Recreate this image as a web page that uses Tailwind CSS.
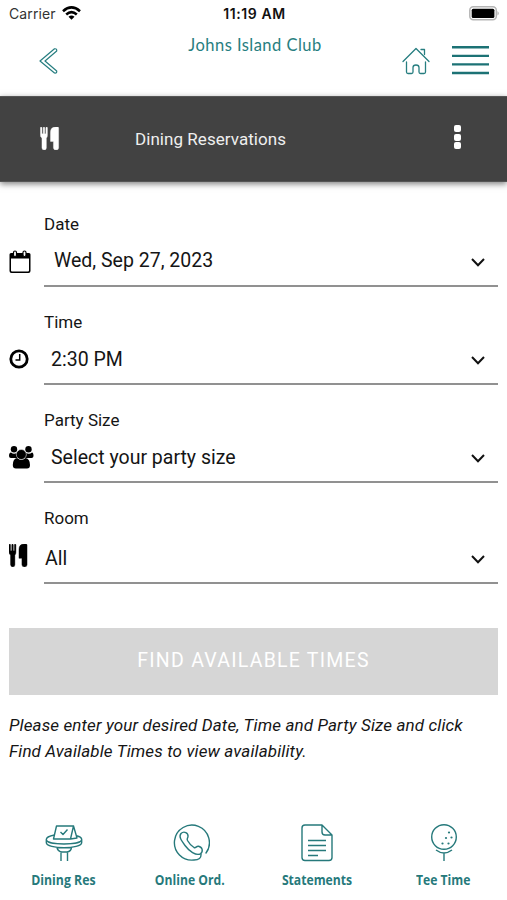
<!DOCTYPE html>
<html lang="en">
<head>
<meta charset="utf-8">
<title>Dining Reservations</title>
<script src="https://cdn.jsdelivr.net/npm/@tailwindcss/browser@4"></script>
</head>
<body class="bg-white">
<svg class="hidden">
  <symbol id="utensils" viewBox="0 0 20 24">
    <path d="M0 1Q0 0 .8 0T1.6 1V7H2.9V1Q2.9 0 3.7 0T4.5 1V7H5.7V1Q5.7 0 6.5 0T7.3 1V8.5Q7.3 10.8 6.2 11.6V21.8Q6.200 24 4 24T1.600 21.800V11.600Q0 10.800 0 8.500ZM19 1V21.800Q19 24 16.300 24T13.600 21.800V15H10.500V5.500Q10.500 0 16 0H18Q19 0 19 1Z" fill="currentColor" stroke="currentColor" stroke-width=".4"/>
  </symbol>
  <symbol id="chev" viewBox="0 0 14 9"><path d="M1 1L7 7.200L13 1" fill="none" stroke="#111" stroke-width="2"/></symbol>
</svg>
<main class="w-[507px] h-[900px] flex flex-col overflow-hidden font-['Roboto',sans-serif] text-[#151515]">
  <header class="h-24 shrink-0 flex flex-col">
    <div class="h-7 grid grid-cols-3 items-center pl-[9px] pr-[7px] font-['Inter',sans-serif] text-[14px] leading-7">
      <div class="flex items-center gap-[6px] text-[#333]">
        <span class="tracking-[0.1px]">Carrier</span>
        <svg class="w-[19px] h-[14px] -mt-[2px]" viewBox="0 0 19 14"><g fill="none" stroke="#000" stroke-width="2.6"><path d="M1 5.2Q9.500-2.400 18 5.200"/><path d="M4.200 8.400Q9.500 3.800 14.800 8.400"/></g><path d="M6.500 10.700Q9.500 8.300 12.500 10.700L9.500 13.800Z"/></svg>
      </div>
      <div class="text-center font-semibold text-[14px] tracking-[0.600px] text-[#111] whitespace-nowrap">11:19 AM</div>
      <svg class="justify-self-end -mt-[2px] w-[31px] h-[15px]" viewBox="0 0 31 15"><rect x=".8" y=".8" width="26.500" height="13" rx="3.500" fill="#fff" stroke="#b5b5b5" stroke-width="1.500"/><rect x="2.700" y="2.700" width="22.700" height="9.200" rx="1.500"/><path d="M28.500 5Q31 7.300 28.500 9.600Z" fill="#aaa"/></svg>
    </div>
    <div class="flex-1 grid grid-cols-3 pl-[39px] pr-[17px] text-[#277e80]">
      <svg class="mt-5 w-[20px] h-[27px]" viewBox="0 0 20 27" fill="none" stroke="currentColor" stroke-width="1.200" stroke-linejoin="round"><path d="M1 13L15.500.8Q18 .4 17.700 3L6 13L17.700 23Q18 25.500 15.500 25Z"/></svg>
      <h1 class="justify-self-center -ml-[19px] mt-[6px] text-[16.500px] leading-[22px] font-['Lato',sans-serif] tracking-[0.460px] whitespace-nowrap">Johns Island Club</h1>
      <div class="flex justify-end gap-[22px]">
        <svg class="mt-[19px] -mr-px w-[28px] h-[28px]" viewBox="0 0 28 28" fill="none" stroke="currentColor" stroke-width="1.300" stroke-linecap="round" stroke-linejoin="round"><path d="M1 14.500L14 1.500L27 14.500M19 2.500H22.500V7.500M4.500 15V25Q4.500 26.500 6 26.500H9.500Q11 26.500 11 25V20.500Q11 18 14 18T17 20.500V25Q17 26.500 18.500 26.500H22Q23.500 26.500 23.500 25V15"/></svg>
        <svg class="mt-[17px] w-[39px] h-[30px]" viewBox="0 0 39 30"><path d="M1 2.200H38M1 10.900H38M1 19.400H38M1 28H38" stroke="#1c7275" stroke-width="2.400"/></svg>
      </div>
    </div>
  </header>
  <div class="h-[86px] shrink-0 bg-[#424242] border-y border-[#555] shadow-[0_2px_6px_rgba(0,0,0,0.500)] flex items-center pl-10 pr-[46px] text-[#efefef]">
    <svg class="w-[20px] h-[23px] -mt-[2px] text-white"><use href="#utensils"/></svg>
    <h2 class="ml-[75px] text-[17px] leading-6 tracking-[0.050px]">Dining Reservations</h2>
    <div class="ml-auto -mt-[4px] flex flex-col gap-[1.500px]"><i class="w-[7px] h-[7px] rounded-[2px] bg-white"></i><i class="w-[7px] h-[7px] rounded-[2px] bg-white"></i><i class="w-[7px] h-[7px] rounded-[2px] bg-white"></i></div>
  </div>
  <form class="shrink-0 pl-[9px] pr-[9px]">
    <div class="h-[105px] flex">
      <svg class="mt-[68px] w-[22px] h-[24px] mr-[13px]" viewBox="0 0 22 24"><path fill-rule="evenodd" d="M2 3H20Q21.500 3 21.500 4.500V21Q21.500 23 19.500 23H2.500Q.5 23 .5 21V4.500Q.5 3 2 3ZM2 8.500V20.500Q2 21.500 3 21.500H19Q20 21.500 20 20.500V8.500Z"/><g fill="#fff" stroke="#000" stroke-width="1.200"><rect x="4.500" y="1" width="3" height="5.500" rx="1.500"/><rect x="14" y="1" width="3" height="5.500" rx="1.500"/></g></svg>
      <div class="flex-1 border-b-2 border-[#919191] flex flex-col"><label class="mt-[30px] h-6 leading-6 text-[17px]">Date</label><div class="mt-[13px] flex justify-between items-center pl-[10px] pr-[13px] text-[19.500px] leading-6"><span>Wed, Sep 27, 2023</span><svg class="mt-[2px] w-[14px] h-[9px]"><use href="#chev"/></svg></div></div>
    </div>
    <div class="h-[98px] flex">
      <svg class="mt-[62px] w-[20px] h-[20px] mr-[15px]" viewBox="0 0 20 20" fill="none" stroke="#000"><circle cx="10" cy="10" r="8.200" stroke-width="2.800"/><path d="M10.700 5V11H6.500" stroke-width="1.500"/></svg>
      <div class="flex-1 border-b-2 border-[#919191] flex flex-col"><label class="mt-[23px] h-6 leading-6 text-[17px]">Time</label><div class="mt-[14px] flex justify-between items-center pl-[7px] pr-[13px] text-[19.500px] leading-6"><span>2:30 PM</span><svg class="w-[14px] h-[9px]"><use href="#chev"/></svg></div></div>
    </div>
    <div class="h-[98px] flex">
      <svg class="mt-[61px] w-[25px] h-[23px] mr-[10px]" viewBox="0 0 25 23"><circle cx="5" cy="3.300" r="3.200"/><circle cx="19.500" cy="3.300" r="3.200"/><path d="M2 6.500Q5 9 8 6.700Q7 11 10 12H2Q0 12 0 10Q0 6.500 2 6.500ZM23 6.500Q20 9 17 6.700Q18 11 15 12H22.500Q24.500 12 24.500 10Q24.500 6.500 23 6.500Z"/><path d="M8 12Q12.300 15.500 16.600 12Q21 13 21 19Q21 22.500 18 22.500H7Q3.800 22.500 3.800 19Q3.800 13 8 12Z"/><circle cx="12.300" cy="8.500" r="5" stroke="#fff" stroke-width=".5"/></svg>
      <div class="flex-1 border-b-2 border-[#919191] flex flex-col"><label class="mt-[23px] h-6 leading-6 text-[17px]">Party Size</label><div class="mt-[14px] flex justify-between items-center pl-[7px] pr-[13px] text-[19.500px] leading-6"><span>Select your party size</span><svg class="w-[14px] h-[9px]"><use href="#chev"/></svg></div></div>
    </div>
    <div class="h-[101px] flex">
      <svg class="mt-[61px] w-[19px] h-[23px] mr-[16px] text-black"><use href="#utensils"/></svg>
      <div class="flex-1 border-b-2 border-[#919191] flex flex-col"><label class="mt-[23px] h-6 leading-6 text-[17px]">Room</label><div class="mt-[17px] flex justify-between items-center pl-[1px] pr-[13px] text-[19.500px] leading-6"><span>All</span><svg class="w-[14px] h-[9px]"><use href="#chev"/></svg></div></div>
    </div>
    <button type="button" class="mt-11 w-full h-[67px] bg-[#d6d6d6] text-white text-[19.500px] leading-6 tracking-[1.250px] block pb-[1px]">FIND AVAILABLE TIMES</button>
    <p class="mt-[17px] italic text-[17px] leading-[26px] tracking-[0.130px] whitespace-nowrap">Please enter your desired Date, Time and Party Size and click<br>Find Available Times to view availability.</p>
  </form>
  <nav class="mt-auto h-[77px] shrink-0 grid grid-cols-4 text-[#26797b] text-center font-['Open_Sans',sans-serif] font-bold text-[13.500px] leading-5">
    <a class="flex flex-col items-center"><svg class="w-[38px] h-[39px] mb-[8px] ml-[2px]" viewBox="0 0 38 39" fill="none" stroke="currentColor" stroke-width="1.400" stroke-linejoin="round"><path d="M11.500 3H28.500L25.500 16H8.500ZM28.500 3L32 15L25.500 16M15.500 9L18 11.500L22.500 6.500"/><path d="M9.500 12Q1.300 13.500 1.300 16.500C1.300 22.500 36.700 22.500 36.700 16.500Q36.700 14 31.500 12.700M1.300 16.500V19.500C1.300 26.500 36.700 26.500 36.700 19.500V16.500M12 24.700Q13 28.500 17 29H22Q26 28.500 26.500 24.700M16 29V38M22.500 29V38"/></svg><span class="scale-x-[0.910]">Dining Res</span></a>
    <a class="flex flex-col items-center"><svg class="w-[38px] h-[39px] mb-[8px] ml-[1px]" viewBox="0 0 38 39" fill="none" stroke="currentColor" stroke-width="1.400" stroke-linejoin="round" stroke-linecap="round"><path d="M34 30A17.500 17.500 0 1 0 22 37Q29.500 37 29 31"/><path d="M9 10.500C12 7.500 16.500 10 16 13.500C15.800 15.500 14.500 15.500 15.500 17.500Q18 22 22 24.500C24 25.500 24 23 26.500 23.300C30.500 24 31.500 28.500 28.500 30.800C24 33 17 28 13 22.500C9 17 6.500 13.500 9 10.500Z"/></svg><span class="scale-x-[0.900]">Online Ord.</span></a>
    <a class="flex flex-col items-center"><svg class="w-[32px] h-[39px] mb-[8px]" viewBox="0 0 32 39" fill="none" stroke="currentColor" stroke-width="1.400" stroke-linejoin="round"><path d="M4 2H21L31 12V34.500Q31 37.500 28 37.500H4Q1 37.500 1 34.500V5Q1 2 4 2ZM21 2V9Q21 12 24 12H31M7 17.500H25M7 22.500H25M7 27.500H25M7 32.500H17"/></svg><span class="scale-x-[0.900]">Statements</span></a>
    <a class="flex flex-col items-center"><svg class="w-[28px] h-[39px] mb-[8px]" viewBox="0 0 28 39" fill="none" stroke="currentColor" stroke-width="1.400"><circle cx="14" cy="14" r="12.300"/><path d="M6 27Q14 33 22 27M14 30V38"/><g fill="currentColor" stroke="none"><circle cx="19" cy="9.500" r="1.100"/><circle cx="16" cy="15" r="1.100"/><circle cx="21.500" cy="14.500" r="1.100"/><circle cx="12.500" cy="20.500" r="1.100"/><circle cx="18.500" cy="20.500" r="1.100"/></g></svg><span class="scale-x-[0.900]">Tee Time</span></a>
  </nav>
</main>
</body>
</html>
